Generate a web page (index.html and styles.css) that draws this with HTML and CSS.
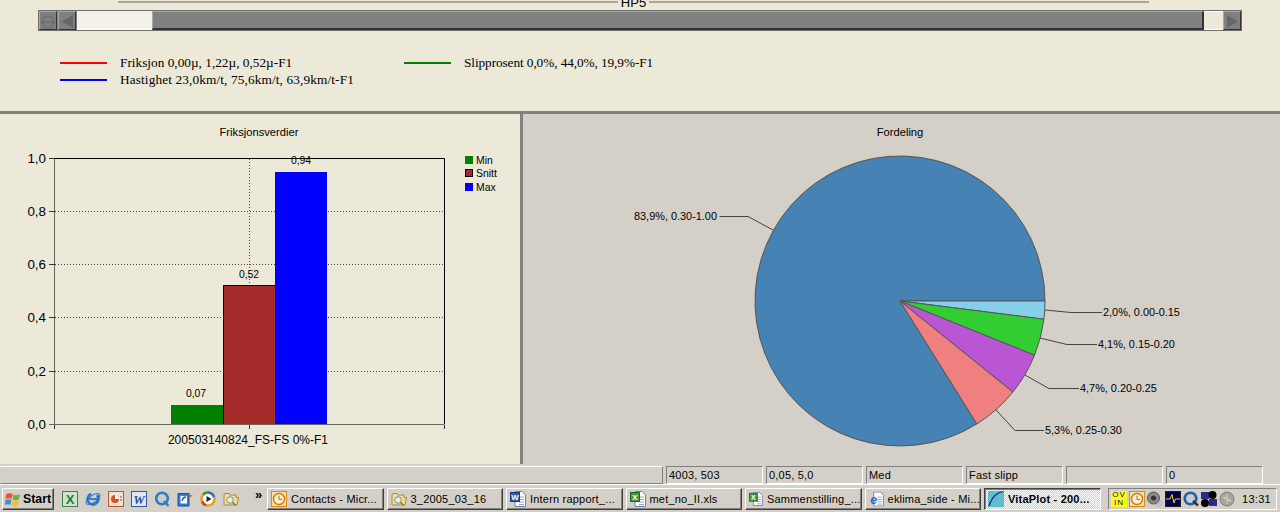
FILE: index.html

```html
<!DOCTYPE html>
<html lang="no">
<head>
  <meta charset="UTF-8" />
  <title>VitaPlot</title>
  <link rel="stylesheet" href="styles.css">
</head>
<body>

  <svg class="icon-defs" width="0" height="0">
    <defs>
      <symbol id="i-clock" viewBox="0 0 16 16">
        <rect x="0.5" y="0.5" width="15" height="15" fill="#f7dfa8" stroke="#d98a1c"/>
        <circle cx="8" cy="8" r="5.5" fill="#fbeec8" stroke="#c8791a" stroke-width="1.4"/>
        <path d="M8 4.5V8.4H11" fill="none" stroke="#b06a10"/>
      </symbol>
      <symbol id="i-folder" viewBox="0 0 16 16">
        <path d="M1 4V14H14L15.5 6.5H13V4H7L6 2.500H2Z" fill="#f7dc8c" stroke="#a08a4a"/>
        <circle cx="7" cy="9" r="3.300" fill="#dcecf6" stroke="#7a8ea0"/>
        <path d="M9.500 11.500L12.500 14" stroke="#8a6a20" stroke-width="1.500"/>
      </symbol>
      <symbol id="i-page" viewBox="0 0 16 16">
        <path d="M5 0.500H12L15.500 4V15.500H5Z" fill="#fff" stroke="#6a7fa8"/>
        <path d="M9 6H14M9 8.500H14M9 11H14M9 13.500H14" stroke="#8fa6cc"/>
      </symbol>
    </defs>
  </svg>

  <section class="top-area">
    <div class="group-title">
      <span class="group-line"></span>
      <span class="group-name">HP5</span>
      <span class="group-line"></span>
    </div>

    <div class="scroller">
      <div class="scroll-btn">
        <svg width="16" height="16" viewBox="0 0 16 16"><circle cx="8" cy="9" r="6" fill="none" stroke="#6c6c6c" stroke-width="1.500"/><path d="M3 9H13" stroke="#6c6c6c" stroke-width="1.500"/></svg>
      </div>
      <div class="scroll-btn">
        <svg width="16" height="16" viewBox="0 0 16 16"><path d="M14 2V15L3 8.500Z" fill="#666"/></svg>
      </div>
      <div class="scroll-thumb-wide"></div>
      <div class="scroll-track"></div>
      <div class="scroll-thumb"></div>
      <div class="scroll-btn">
        <svg width="16" height="16" viewBox="0 0 16 16"><path d="M3 2V15L14 8.500Z" fill="#666"/></svg>
      </div>
    </div>

    <div class="series-legend">
      <div class="series-col col-one">
        <div class="series"><span class="series-line red"></span>Friksjon 0,00µ, 1,22µ, 0,52µ-F1</div>
        <div class="series"><span class="series-line blue"></span><span class="series-wide">Hastighet 23,0km/t, 75,6km/t, 63,9km/t-F1</span></div>
      </div>
      <div class="series-col">
        <div class="series"><span class="series-line green"></span><span class="series-narrow">Slipprosent 0,0%, 44,0%, 19,9%-F1</span></div>
      </div>
    </div>
  </section>

  <main class="charts">
    <div class="panel panel-bars">
      <svg class="chart" width="520" height="350" viewBox="0 114 520 350">
        <text class="t-title" x="259" y="136" text-anchor="middle">Friksjonsverdier</text>

        <g class="grid">
          <path d="M55 211.500H444M55 264.500H444M55 317.500H444M55 371.500H444M249.500 159V424"/>
        </g>

        <rect x="171" y="405" width="52" height="19.500" fill="#008000"/>
        <rect x="223" y="285" width="52" height="139.500" fill="#a52a2a"/>
        <path d="M223.500 424V285.500H275" fill="none" stroke="#000"/>
        <rect x="275" y="172" width="52" height="252.500" fill="#0000ff"/>

        <path d="M55 158.500H444.500V424" fill="none" stroke="#000"/>
        <path d="M54.500 158V425M49 424.500H444.500" fill="none" stroke="#666"/>
        <path d="M49 158.500H55M49 211.500H55M49 264.500H55M49 317.500H55M49 371.500H55M54.500 425V429M249.500 425V429M444.500 425V429" stroke="#333"/>

        <g class="t-axis" text-anchor="end">
          <text x="46" y="163">1,0</text>
          <text x="46" y="216">0,8</text>
          <text x="46" y="269">0,6</text>
          <text x="46" y="322">0,4</text>
          <text x="46" y="376">0,2</text>
          <text x="46" y="429">0,0</text>
        </g>

        <g class="t-value" text-anchor="middle">
          <text x="301" y="164">0,94</text>
          <text x="249" y="278">0,52</text>
          <text x="196" y="397">0,07</text>
        </g>

        <text class="t-cat" x="248" y="444" text-anchor="middle">200503140824_FS-FS 0%-F1</text>

        <rect x="465" y="156" width="8" height="8" fill="#008000"/>
        <rect x="465.500" y="169.500" width="7" height="7" fill="#a52a2a" stroke="#000"/>
        <rect x="465" y="183" width="8" height="8" fill="#0000ff"/>
        <g class="t-value">
          <text x="476" y="164">Min</text>
          <text x="476" y="177">Snitt</text>
          <text x="476" y="191">Max</text>
        </g>
      </svg>
    </div>

    <div class="panel panel-pie">
      <svg class="chart" width="757" height="350" viewBox="523 114 757 350">
        <text class="t-title" x="900" y="136" text-anchor="middle">Fordeling</text>

        <g stroke="#555" stroke-width="1">
          <path d="M900 301L976.900 423.900A145 145 0 1 1 1045 301Z" fill="#4682b4"/>
          <path d="M900 301H1045A145 145 0 0 1 1043.900 319.200Z" fill="#87ceeb"/>
          <path d="M900 301L1043.900 319.200A145 145 0 0 1 1034.500 355.200Z" fill="#32cd32"/>
          <path d="M900 301L1034.500 355.200A145 145 0 0 1 1012.900 392Z" fill="#ba55d3"/>
          <path d="M900 301L1012.900 392A145 145 0 0 1 976.900 423.900Z" fill="#f08080"/>
        </g>

        <g class="leaders">
          <path d="M773 230L748 216.500H719.500"/>
          <path d="M1045 310L1071 312.500H1102"/>
          <path d="M1040 338L1067 344.500H1097"/>
          <path d="M1025 375L1049 388.500H1079"/>
          <path d="M996 410L1015 430.500H1044"/>
        </g>

        <g class="t-label">
          <text x="634" y="220">83,9%, 0.30-1.00</text>
          <text x="1103" y="316">2,0%, 0.00-0.15</text>
          <text x="1098" y="348">4,1%, 0.15-0.20</text>
          <text x="1080" y="392">4,7%, 0.20-0.25</text>
          <text x="1045" y="434">5,3%, 0.25-0.30</text>
        </g>
      </svg>
    </div>
  </main>

  <footer class="status-bar">
    <div class="status-cell status-main"></div>
    <div class="status-cell">4003, 503</div>
    <div class="status-cell">0,05, 5,0</div>
    <div class="status-cell">Med</div>
    <div class="status-cell">Fast slipp</div>
    <div class="status-cell"></div>
    <div class="status-cell">0</div>
  </footer>

  <div class="taskbar">
    <button class="start-btn">
      <svg width="16" height="16" viewBox="0 0 16 16">
        <path d="M1 3.500Q4 1.500 7.500 3L6.500 8Q3.500 6.500 0.500 8Z" fill="#e8562a"/>
        <path d="M8.500 3.500Q11.500 5 15 3L14 8.500Q10.500 10 7.500 8.500Z" fill="#6cb33f"/>
        <path d="M0.500 9Q3.500 7.500 6.300 9L5.500 14Q2.500 12.500 0 14Z" fill="#3f8ce0"/>
        <path d="M7.300 9.500Q10.500 11 13.800 9.500L13 15Q9.800 16 6.500 14.500Z" fill="#f4c320"/>
      </svg>
      <span>Start</span>
    </button>

    <div class="quick-launch">
      <svg width="16" height="16" viewBox="0 0 16 16">
        <rect x="0.500" y="0.500" width="15" height="15" fill="#cfe3cc" stroke="#3f7f4f"/>
        <text class="g-x" x="8" y="12.500" text-anchor="middle">X</text>
      </svg>
      <svg width="16" height="16" viewBox="0 0 16 16">
        <ellipse cx="8" cy="8" rx="8" ry="3.500" fill="none" stroke="#3f8ad0" stroke-width="1.300" transform="rotate(-35 8 8)"/>
        <circle cx="8" cy="8" r="5.500" fill="none" stroke="#2a6fc8" stroke-width="2.400" stroke-dasharray="22 6" transform="rotate(15 8 8)"/>
        <path d="M4 8H12" stroke="#2a6fc8" stroke-width="1.800"/>
      </svg>
      <svg width="16" height="16" viewBox="0 0 16 16">
        <rect x="0.500" y="0.500" width="15" height="15" fill="#f6e2d2" stroke="#c4552a"/>
        <circle cx="7" cy="8" r="4" fill="#d2552a"/>
        <path d="M7 8V4A4 4 0 0 1 11 8Z" fill="#fff"/>
        <path d="M12 6H14M12 9H14" stroke="#b04a20"/>
      </svg>
      <svg width="16" height="16" viewBox="0 0 16 16">
        <rect x="0.500" y="0.500" width="15" height="15" fill="#dfe7f7" stroke="#3558a8"/>
        <text class="g-w" x="8" y="12.500" text-anchor="middle">W</text>
      </svg>
      <svg width="16" height="16" viewBox="0 0 16 16">
        <circle cx="8" cy="7.500" r="5.800" fill="#c8ccd0" stroke="#2f7cbc" stroke-width="2.600"/>
        <path d="M10 10L14.500 15" stroke="#2f7cbc" stroke-width="2.400"/>
      </svg>
      <svg width="16" height="16" viewBox="0 0 16 16">
        <path d="M1 2.500H12V15H1Z" fill="#2f7fd8" stroke="#1f4f98"/>
        <path d="M3.500 5H10V12.500H3.500Z" fill="#fff"/>
        <path d="M5 10Q6 6 9 6" fill="none" stroke="#1f4f98" stroke-width="1.300"/>
        <path d="M12 1L13.500 4L16 4.500L13.500 6L12 8Z" fill="#e06a2a"/>
      </svg>
      <svg width="16" height="16" viewBox="0 0 16 16">
        <circle cx="8" cy="8" r="6.500" fill="#fff" stroke="#e8a020" stroke-width="2.600"/>
        <path d="M3 3.500A6.500 6.500 0 0 1 8 1.500" fill="none" stroke="#3a9a3a" stroke-width="2.600"/>
        <path d="M8 1.500A6.500 6.500 0 0 1 14 6" fill="none" stroke="#3a6ad0" stroke-width="2.600"/>
        <path d="M2 10.500A6.500 6.500 0 0 0 6 14.300" fill="none" stroke="#d04020" stroke-width="2.600"/>
        <path d="M6.500 5L11.500 8L6.500 11Z" fill="#222"/>
      </svg>
      <svg width="16" height="16"><use href="#i-folder"/></svg>
    </div>

    <span class="chevron">»</span>

    <div class="task-list">
      <div class="task-btn"><svg width="16" height="16"><use href="#i-clock"/></svg><span class="task-name">Contacts - Micr...</span></div>
      <div class="task-btn"><svg width="16" height="16"><use href="#i-folder"/></svg><span class="task-name">3_2005_03_16</span></div>
      <div class="task-btn">
        <svg width="16" height="16" viewBox="0 0 16 16"><use href="#i-page" width="16" height="16"/><rect x="0.500" y="1.500" width="9" height="9" fill="#3558a8" stroke="#1c3a80"/><text class="g-doc" x="5" y="9" text-anchor="middle">W</text></svg>
        <span class="task-name">Intern rapport_...</span>
      </div>
      <div class="task-btn">
        <svg width="16" height="16" viewBox="0 0 16 16"><use href="#i-page" width="16" height="16"/><rect x="0.500" y="1.500" width="9" height="9" fill="#3f9a3f" stroke="#1f6a1f"/><text class="g-doc" x="5" y="9" text-anchor="middle">X</text></svg>
        <span class="task-name">met_no_II.xls</span>
      </div>
      <div class="task-btn">
        <svg width="16" height="16" viewBox="0 0 16 16"><use href="#i-page" width="16" height="16"/><rect x="0.500" y="1.500" width="9" height="9" fill="#3f9a3f" stroke="#1f6a1f"/><text class="g-doc" x="5" y="9" text-anchor="middle">X</text></svg>
        <span class="task-name">Sammenstilling_...</span>
      </div>
      <div class="task-btn">
        <svg width="16" height="16" viewBox="0 0 16 16"><use href="#i-page" width="16" height="16"/><text class="g-e-small" x="5" y="13" text-anchor="middle">e</text></svg>
        <span class="task-name">eklima_side - Mi...</span>
      </div>
      <div class="task-btn task-active">
        <svg width="16" height="16" viewBox="0 0 16 16"><rect width="16" height="16" fill="#5fbfcf"/><path d="M1 15Q4 6 9 3T15 1" fill="none" stroke="#102a80" stroke-width="1.300"/></svg>
        <span class="task-name">VitaPlot - 200...</span>
      </div>
    </div>

    <div class="tray">
      <div class="tray-ov">OV<br>IN</div>
      <svg width="16" height="16"><use href="#i-clock"/></svg>
      <svg width="16" height="16" viewBox="0 0 16 16">
        <circle cx="6.500" cy="7" r="6" fill="#8a8a8a" stroke="#555"/>
        <circle cx="6.500" cy="7" r="2.500" fill="#333"/>
        <path d="M9 14Q13 13 14 9M11 15.500Q15 15 16 11" fill="none" stroke="#a8a8c8"/>
      </svg>
      <svg width="16" height="16" viewBox="0 0 16 16">
        <rect x="0.500" y="0.500" width="15" height="15" fill="#000050" stroke="#202020"/>
        <path d="M1 8H5L7 3.500L9 12L10.500 8H15" fill="none" stroke="#f4d020"/>
      </svg>
      <svg width="16" height="16" viewBox="0 0 16 16">
        <circle cx="7.500" cy="7.500" r="5.800" fill="#c8ccd0" stroke="#1f5fa8" stroke-width="2.600"/>
        <path d="M10 10L15 14.500" stroke="#333" stroke-width="2.400"/>
      </svg>
      <svg width="16" height="16" viewBox="0 0 16 16">
        <rect x="0" y="1" width="8" height="7" fill="#2a2a90"/>
        <rect x="8" y="8" width="8" height="7" fill="#2a2a90"/>
        <circle cx="11.500" cy="4" r="4" fill="#000"/>
        <circle cx="4" cy="12" r="4" fill="#000"/>
      </svg>
      <svg width="16" height="16" viewBox="0 0 16 16">
        <circle cx="8" cy="8" r="7" fill="#a8a49c" stroke="#808080"/>
        <path d="M4 6.500H7L5.500 8.500M12 9.500H9L10.500 7.500M8 3V13" fill="none" stroke="#d8d8d0"/>
      </svg>
      <span class="clock-text">13:31</span>
    </div>
  </div>

</body>
</html>
```

FILE: styles.css

```css
html, body {
  margin: 0;
  padding: 0;
}
body {
  width: 1280px;
  height: 512px;
  overflow: hidden;
  background: #d4d0c8;
  font-family: "Liberation Sans", sans-serif;
  color: #000;
}
.icon-defs {
  display: block;
  height: 0;
}

/* top area */
.top-area {
  height: 111px;
  box-sizing: border-box;
  overflow: hidden;
  background: #ece9d8;
}
.group-title {
  display: flex;
  align-items: center;
  height: 4px;
  margin: 0 131px 0 118px;
  font-size: 13px;
}
.group-line {
  flex: 1;
  height: 2px;
  background: #aca899;
}
.group-name {
  padding: 0 3px;
  line-height: 13px;
}
.scroller {
  display: flex;
  height: 21px;
  margin: 6px 38px 0;
  box-sizing: border-box;
  border: 1px solid #6f6f6f;
  background: #808080;
}
.scroll-btn {
  display: flex;
  align-items: center;
  justify-content: center;
  width: 18px;
  margin-right: 1px;
  box-sizing: border-box;
  background: #808080;
  border: 1px solid;
  border-color: #a8a8a8 #333 #333 #a8a8a8;
}
.scroller .scroll-btn:last-child {
  margin-right: 0;
}
.scroll-thumb-wide {
  width: 75px;
  background: #f4f2e6;
  border-bottom: 1px solid #fff;
}
.scroll-track {
  flex: 1;
  box-sizing: border-box;
  background: #808080;
  border: 1px solid;
  border-color: #a8a8a8 #333 #333 #a8a8a8;
  border-width: 1px 2px 2px 1px;
}
.scroll-thumb {
  width: 19px;
  box-sizing: border-box;
  background: #ece9d8;
  border-top: 1px solid #fff;
  border-bottom: 1px solid #fff;
}
.series-legend {
  display: flex;
  margin: 23px 0 0 60px;
  font-family: "Liberation Serif", serif;
  font-size: 13.3px;
  line-height: 17px;
}
.series {
  display: flex;
  align-items: center;
}
.series-wide {
  letter-spacing: 0.12px;
}
.series-narrow {
  letter-spacing: -0.09px;
}
.col-one {
  width: 344px;
}
.series-line {
  width: 47px;
  height: 2px;
  margin-right: 13px;
}
.series-line.red { background: #ff0000; }
.series-line.blue { background: #0000ff; }
.series-line.green { background: #008000; }

/* charts */
.charts {
  display: flex;
  height: 353px;
  box-sizing: border-box;
  border-top: 3px solid #808080;
}
.panel-bars {
  width: 523px;
  box-sizing: border-box;
  background: #ece9d8;
  border-right: 3px solid #808080;
}
.panel-pie {
  flex: 1;
  background: #d4d0c8;
}
.chart {
  display: block;
}
.t-title { font-size: 11.2px; }
.t-axis { font-size: 13.4px; }
.t-value { font-size: 10.4px; }
.t-cat { font-size: 12px; }
.t-label { font-size: 10.9px; }
.grid path {
  fill: none;
  stroke: #444;
  stroke-dasharray: 1 2;
}
.leaders path {
  fill: none;
  stroke: #444;
}

/* status bar */
.status-bar {
  display: flex;
  gap: 3px;
  height: 20px;
  padding: 2px 17px 0 0;
  box-sizing: border-box;
  font-size: 11px;
}
.status-cell {
  width: 97px;
  height: 18px;
  box-sizing: border-box;
  padding: 1px 2px 0;
  line-height: 14px;
  letter-spacing: 0.2px;
  border: 1px solid;
  border-color: #808080 #fff #fff #808080;
}
.status-main {
  flex: 1;
  border-color: #fff #808080 #808080 #d4d0c8;
}

/* taskbar */
.taskbar {
  display: flex;
  align-items: center;
  height: 28px;
  padding: 3px 3px 2px 2px;
  box-sizing: border-box;
  border-top: 1px solid #fff;
  font-size: 11px;
}
.start-btn {
  display: flex;
  align-items: center;
  gap: 2px;
  width: 52px;
  height: 22px;
  padding: 0 0 0 2px;
  box-sizing: border-box;
  background: #d4d0c8;
  border: 1px solid;
  border-color: #fff #404040 #404040 #fff;
  box-shadow: inset -1px -1px 0 #808080;
  font-family: "Liberation Sans", sans-serif;
  font-size: 12.3px;
  font-weight: bold;
  color: #000;
}
.quick-launch {
  display: flex;
  gap: 7px;
  width: 177px;
  margin-left: 8px;
}
.chevron {
  width: 12px;
  margin: -8px 0 0 16px;
  font-size: 13px;
  font-weight: bold;
  line-height: 12px;
}
.task-list {
  display: flex;
  gap: 3px;
  width: 834px;
}
.task-btn {
  display: flex;
  align-items: center;
  gap: 4px;
  width: 116.500px;
  height: 22px;
  padding-left: 3px;
  box-sizing: border-box;
  background: #d4d0c8;
  border: 1px solid;
  border-color: #fff #404040 #404040 #fff;
  box-shadow: inset -1px -1px 0 #808080;
  white-space: nowrap;
  overflow: hidden;
}
.task-active {
  border-color: #404040 #fff #fff #404040;
  box-shadow: inset 1px 1px 0 #808080;
  background-image: repeating-conic-gradient(#d4d0c8 0 25%, #fff 0 50%);
  background-size: 2px 2px;
  font-weight: bold;
}
.task-name {
  letter-spacing: 0.2px;
}
.tray {
  display: flex;
  align-items: center;
  gap: 2px;
  width: 169px;
  height: 22px;
  margin-left: 7px;
  padding-left: 2px;
  box-sizing: border-box;
  border: 1px solid;
  border-color: #808080 #fff #fff #808080;
}
.tray-ov {
  width: 16px;
  height: 16px;
  background: #ffff00;
  color: #0000c0;
  font-family: "Liberation Sans", sans-serif;
  font-size: 8px;
  line-height: 8px;
  letter-spacing: 1px;
  text-align: center;
}
.clock-text {
  margin-left: 5px;
  letter-spacing: 0.3px;
}

/* small glyphs in the icons */
.g-x { font: bold 13px "Liberation Sans", sans-serif; fill: #1f7a3f; }
.g-w { font: italic bold 13px "Liberation Serif", serif; fill: #2a4fa8; }
.g-doc { font: bold 8px "Liberation Sans", sans-serif; fill: #fff; }
.g-e-small { font: italic bold 13px "Liberation Sans", sans-serif; fill: #2a6fc8; }
```
